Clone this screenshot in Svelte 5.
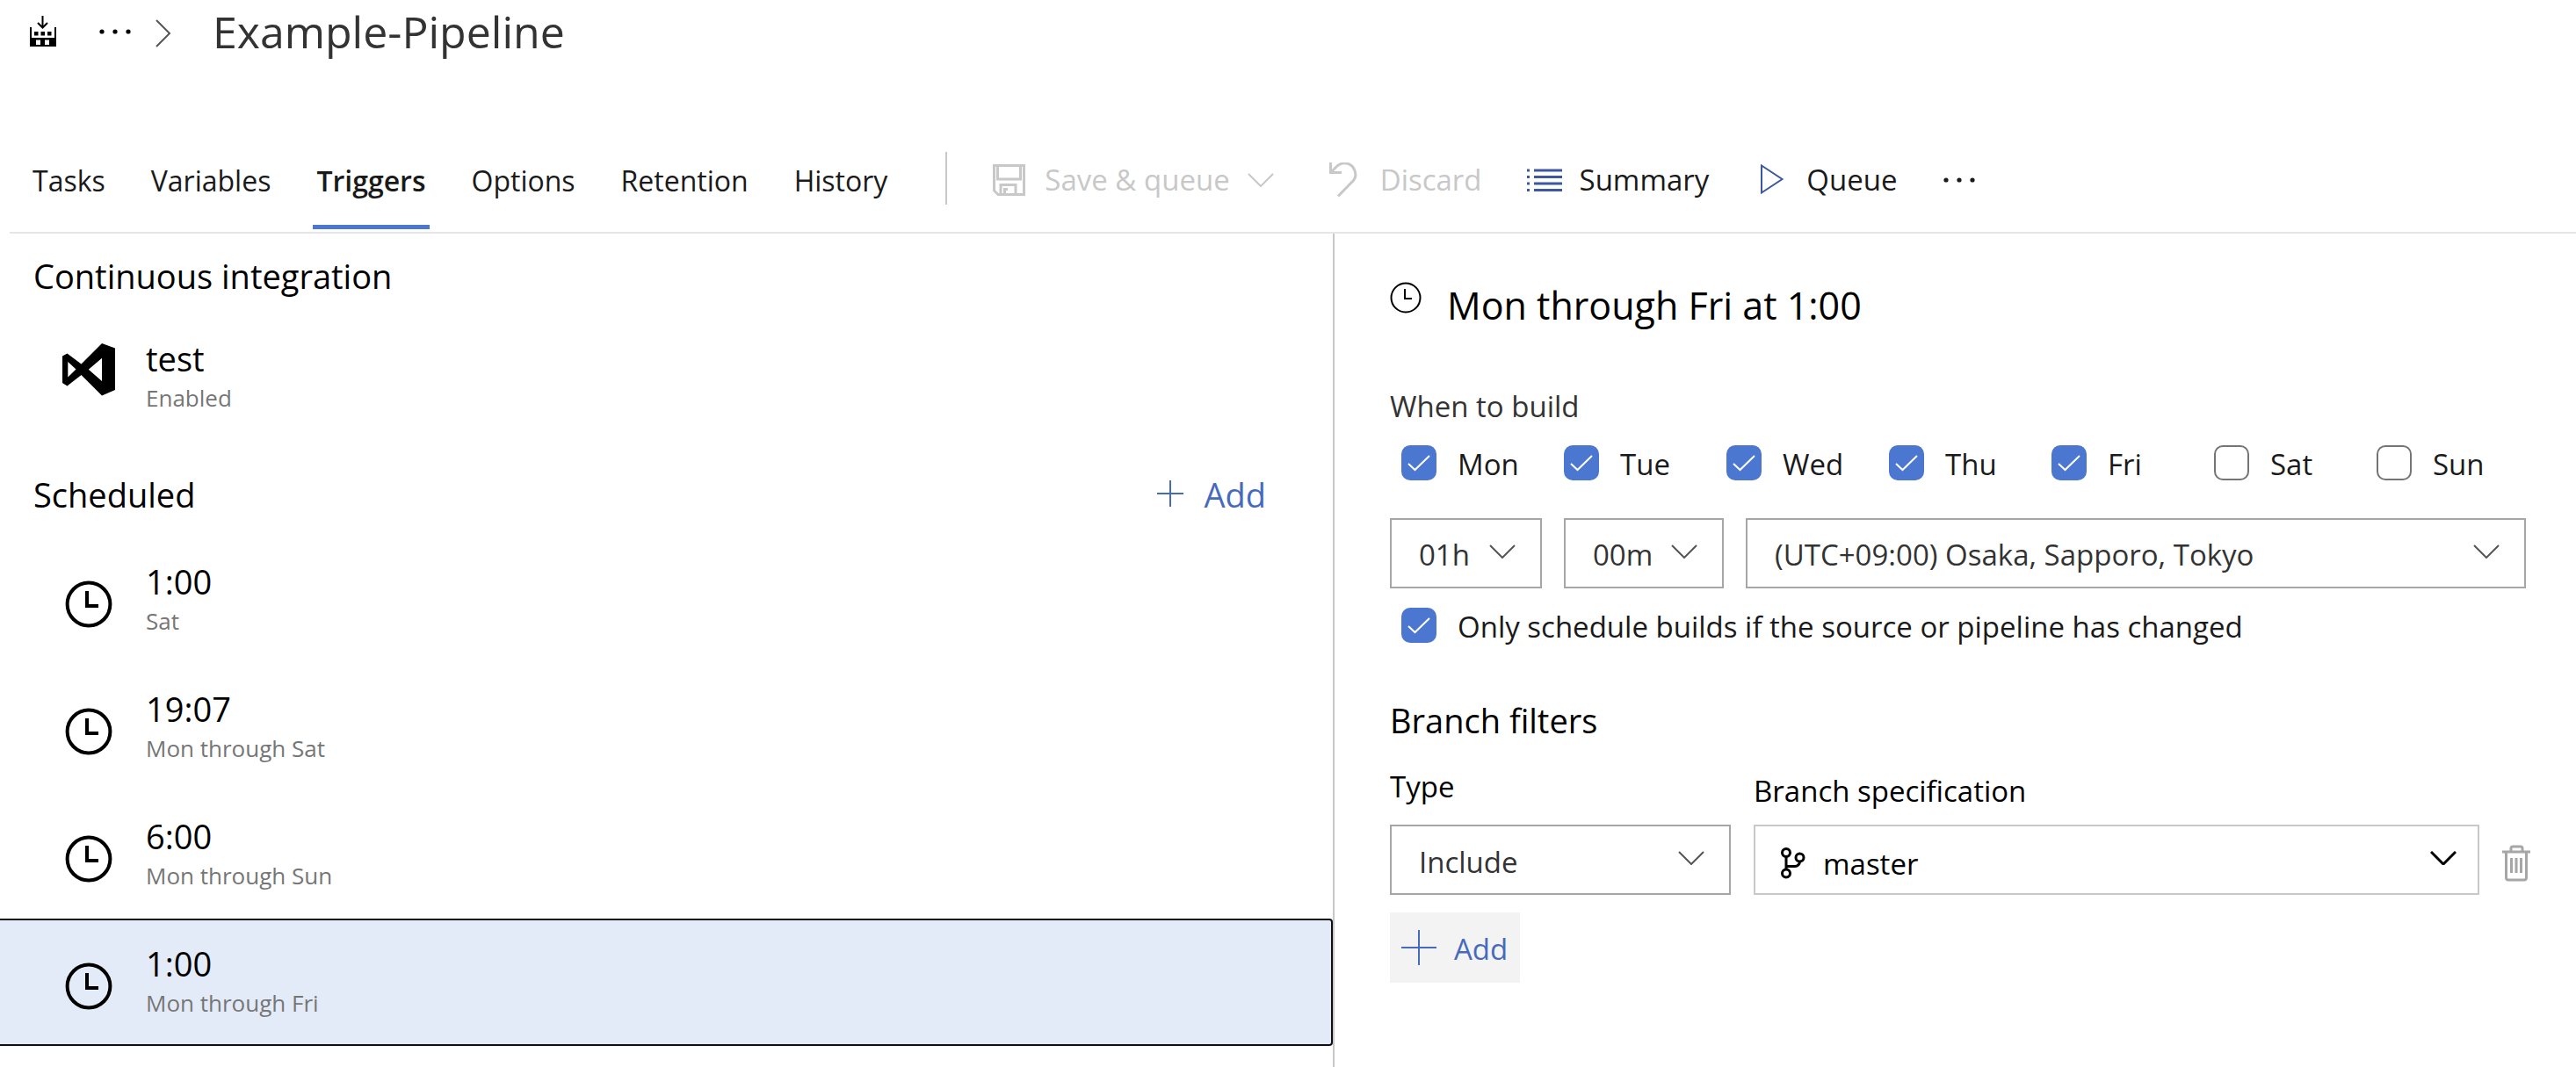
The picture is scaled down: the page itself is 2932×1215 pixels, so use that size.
<script>
  const tabs = ['Tasks', 'Variables', 'Triggers', 'Options', 'Retention', 'History'];
  let activeTab = $state('Triggers');

  const schedules = [
    { time: '1:00', days: 'Sat' },
    { time: '19:07', days: 'Mon through Sat' },
    { time: '6:00', days: 'Mon through Sun' },
    { time: '1:00', days: 'Mon through Fri' }
  ];
  let selected = $state(3);

  let days = $state([
    { name: 'Mon', on: true },
    { name: 'Tue', on: true },
    { name: 'Wed', on: true },
    { name: 'Thu', on: true },
    { name: 'Fri', on: true },
    { name: 'Sat', on: false },
    { name: 'Sun', on: false }
  ]);
  let onlyChanged = $state(true);
</script>

{#snippet chevron()}
  <svg class="chevron" width="30" height="16" viewBox="0 0 30 16" aria-hidden="true">
    <path d="M1 1 15 15 29 1" />
  </svg>
{/snippet}

{#snippet dots()}
  <svg width="40" height="8" viewBox="0 0 40 8" aria-hidden="true">
    <circle cx="4" cy="4" r="2.600" /><circle cx="19" cy="4" r="2.600" /><circle cx="34" cy="4" r="2.600" />
  </svg>
{/snippet}

{#snippet tick()}
  <svg class="tick" width="40" height="40" viewBox="0 0 40 40" aria-hidden="true">
    <path d="M8 21 15.500 28 32 12" />
  </svg>
{/snippet}

<div class="page">
  <header class="crumbs">
    <svg class="build" width="30" height="36" viewBox="0 0 30 36" aria-hidden="true">
      <path d="M14.500 0V13M9 8 14.500 13.500 20 8" fill="none" stroke="#000" stroke-width="2" />
      <path
        fill-rule="evenodd"
        d="M0 13H2V25H28V13H30V35H0ZM7 27.500V33H12V27.500ZM17 27.500V33H22V27.500ZM5 18H9.500V22.500H5ZM12.500 18H17V22.500H12.500ZM20 18H24.500V22.500H20Z"
      />
    </svg>
    <button class="more" aria-label="More breadcrumbs">{@render dots()}</button>
    <svg class="next" width="18" height="32" viewBox="0 0 18 32" aria-hidden="true">
      <path d="M1 1 16 16 1 31" />
    </svg>
    <h1>Example-Pipeline</h1>
  </header>

  <div class="toolbar">
    <nav class="tabs" aria-label="Pipeline">
      {#each tabs as tab}
        <button class="tab" class:active={tab === activeTab} onclick={() => (activeTab = tab)}>{tab}</button>
      {/each}
    </nav>
    <div class="commands">
      <button class="command" disabled>
        <svg width="40" height="36" viewBox="0 0 40 36" aria-hidden="true">
          <path
            class="line"
            d="M2.500 1.500H36.500V34.500H7L2.500 30ZM6.500 2V17H32.500V2M10 34V23.500H27V34M14.500 34V28.500H18"
          />
        </svg>
        Save &amp; queue
        <span class="drop">{@render chevron()}</span>
      </button>
      <button class="command" disabled>
        <svg width="40" height="40" viewBox="0 0 40 40" aria-hidden="true">
          <path class="line" d="M3.500 0V11.500H16M4 11 11 4C17-1 26 0 30 7C33 13 32 19 27 23L12 38.500" />
        </svg>
        Discard
      </button>
      <button class="command">
        <svg class="blue" width="40" height="28" viewBox="0 0 40 28" aria-hidden="true">
          <path class="line" d="M0 3H3M8 3H40M0 10.500H3M8 10.500H40M0 18H3M8 18H40M0 25.500H3M8 25.500H40" />
        </svg>
        Summary
      </button>
      <button class="command">
        <svg class="blue" width="40" height="36" viewBox="0 0 40 36" aria-hidden="true">
          <path class="line play" d="M9 1.500 32.500 17 9 32.500Z" />
        </svg>
        Queue
      </button>
      <button class="command" aria-label="More commands">{@render dots()}</button>
    </div>
  </div>

  <main class="panes">
    <section class="list">
      <h2>Continuous integration</h2>
      <button class="row">
        <svg class="vs" width="60" height="60" viewBox="0 0 60 60" aria-hidden="true">
          <path
            fill-rule="evenodd"
            d="M0 14.500 5.500 11.500 21.500 23.500 45 0 60 5.500V53L45 59.500 21.500 36 5.500 48.500 0 45ZM6.300 21V38.500L15.500 29.500ZM45 16.700 29.800 29.700 45 43Z"
          />
        </svg>
        <span class="text"><span class="name">test</span><span class="sub">Enabled</span></span>
      </button>

      <div class="scheduled">
        <h2>Scheduled</h2>
        <button class="add-link">
          <svg width="32" height="32" viewBox="0 0 32 32" aria-hidden="true"><path d="M16 0V30M1 15H31" /></svg>
          Add
        </button>
      </div>

      {#each schedules as item, i}
        <button class="row" class:selected={i === selected} onclick={() => (selected = i)}>
          <svg class="clock" width="60" height="60" viewBox="-4 -4 60 60" aria-hidden="true">
            <circle cx="26" cy="26" r="24.400" /><path d="M24 11V28H37" />
          </svg>
          <span class="text"><span class="name">{item.time}</span><span class="sub">{item.days}</span></span>
        </button>
      {/each}
    </section>

    <section class="detail">
      <div class="title">
        <svg width="36" height="36" viewBox="0 0 36 36" aria-hidden="true">
          <circle cx="18" cy="18" r="16.500" /><path d="M17 8V19H25" />
        </svg>
        <h2>Mon through Fri at 1:00</h2>
      </div>

      <h3>When to build</h3>
      <div class="days">
        {#each days as day}
          <label class="check">
            <span class="box"><input type="checkbox" bind:checked={day.on} />{@render tick()}</span>
            <span class="caption">{day.name}</span>
          </label>
        {/each}
      </div>

      <div class="time">
        <span class="select">
          <select aria-label="Hour"><option>01h</option></select>
          {@render chevron()}
        </span>
        <span class="select">
          <select aria-label="Minute"><option>00m</option></select>
          {@render chevron()}
        </span>
        <span class="select">
          <select aria-label="Time zone"><option>(UTC+09:00) Osaka, Sapporo, Tokyo</option></select>
          {@render chevron()}
        </span>
      </div>

      <label class="check only">
        <span class="box"><input type="checkbox" bind:checked={onlyChanged} />{@render tick()}</span>
        <span class="caption">Only schedule builds if the source or pipeline has changed</span>
      </label>

      <h2 class="filters">Branch filters</h2>
      <div class="filter">
        <div class="field">
          <label for="type">Type</label>
          <span class="select">
            <select id="type"><option>Include</option><option>Exclude</option></select>
            {@render chevron()}
          </span>
        </div>
        <div class="field spec">
          <label for="branch">Branch specification</label>
          <span class="select branch">
            <select id="branch"><option>master</option></select>
            <svg class="fork" width="28" height="36" viewBox="0 0 28 36" aria-hidden="true">
              <circle cx="6" cy="6" r="4.500" /><circle cx="21.500" cy="11.500" r="4.500" /><circle cx="6" cy="29.500" r="4.500" />
              <path d="M6 10.500V25M21.500 16C21.500 19 19 21.500 16 21.500H6" />
            </svg>
            {@render chevron()}
          </span>
        </div>
        <button class="trash" aria-label="Delete filter">
          <svg width="32" height="42" viewBox="0 0 32 42" aria-hidden="true">
            <path d="M0 8H32M10 8V4Q10 2 12 2H21Q23 2 23 4V8M4.500 8V37Q4.500 40 7 40H25Q27.500 40 27.500 37V8M10.500 15V32M16 15V32M21.500 15V32" />
          </svg>
        </button>
      </div>
      <button class="add-filter">
        <svg width="40" height="40" viewBox="0 0 40 40" aria-hidden="true"><path d="M20 0V40M0 20H40" /></svg>
        <span class="caption">Add</span>
      </button>
    </section>
  </main>
</div>

<style>
  :global(body) {
    background: #fff;
  }
  .page {
    display: flex;
    flex-direction: column;
    min-height: 100vh;
    font-family: 'Open Sans', 'Noto Sans', sans-serif;
    font-size: 33px;
    line-height: 46px;
    color: #1a1a1a;
  }
  h1,
  h2,
  h3 {
    margin: 0;
    font-weight: 400;
  }
  h2 {
    font-size: 38px;
    line-height: 48px;
    color: #000;
  }
  h3 {
    font-size: 33px;
    line-height: 46px;
    color: #333;
  }
  button,
  select {
    font: inherit;
    color: inherit;
    background: none;
    border: 0;
    padding: 0;
    margin: 0;
    cursor: pointer;
  }
  svg {
    flex: none;
    display: block;
  }

  .crumbs {
    display: flex;
    align-items: center;
    padding-left: 34px;
  }
  .more {
    margin: 0 25px 0 48px;
  }
  .next {
    margin-right: 47px;
    margin-top: 4px;
    fill: none;
    stroke: #555;
    stroke-width: 2;
  }
  h1 {
    font-size: 50px;
    line-height: 72px;
    color: #333;
  }

  .toolbar {
    display: flex;
    margin: 77px 0 0 11px;
    padding: 0 0 3px 22px;
    border-bottom: 2px solid #e6e6e6;
  }
  .tabs {
    display: flex;
    gap: 44px;
    font-size: 32px;
  }
  .tab {
    padding: 34px 4px 27px;
    border-bottom: 5px solid transparent;
  }
  .tab.active {
    font-weight: 600;
    border-color: #4b77d1;
  }
  .commands {
    display: flex;
    align-items: center;
    gap: 51px;
    height: 60px;
    margin: 24px 0 0 62px;
    padding-left: 51px;
    border-left: 2px solid #c8c8c8;
  }
  .command {
    display: flex;
    align-items: center;
    gap: 20px;
    padding-top: 3px;
  }
  .command:disabled {
    color: #c8c8c8;
    cursor: default;
  }
  .line {
    fill: none;
    stroke: currentColor;
    stroke-width: 3;
  }
  .play {
    stroke-width: 2;
  }
  .command svg {
    fill: currentColor;
  }
  .command .blue {
    color: #3b58a0;
  }
  .drop {
    width: 40px;
  }
  .chevron,
  .command .chevron {
    fill: none;
    stroke: #555;
    stroke-width: 2;
  }
  .command .chevron {
    stroke: currentColor;
  }

  .panes {
    flex: 1;
    display: grid;
    grid-template-columns: minmax(0, 1519fr) minmax(0, 1413fr);
  }
  .list {
    padding-top: 24px;
    border-right: 2px solid #c8c8c8;
  }
  .list h2 {
    padding-left: 38px;
  }
  .row {
    display: flex;
    gap: 35px;
    width: 100%;
    height: 145px;
    padding: 25px 69px 25px 71px;
    border: 2px solid transparent;
    border-left: 0;
    text-align: left;
  }
  .list > h2 + .row {
    margin-top: 19px;
  }
  .row.selected {
    background: #e4ebf8;
    border-color: #101014;
    border-radius: 0 4px 4px 0;
  }
  .vs {
    margin-top: 7px;
  }
  .clock {
    margin-top: 20px;
    fill: none;
    stroke: #000;
    stroke-width: 4;
  }
  .text {
    display: flex;
    flex-direction: column;
  }
  .name {
    font-size: 38px;
    line-height: 48px;
    color: #000;
  }
  .sub {
    font-size: 26px;
    line-height: 42px;
    color: #767676;
  }
  .scheduled {
    display: flex;
    justify-content: space-between;
    padding: 37px 76px 24px 0;
  }
  .add-link {
    display: flex;
    align-items: center;
    gap: 22px;
    font-size: 38px;
    line-height: 48px;
    color: #466bbd;
  }
  .add-link svg,
  .add-filter svg {
    stroke: currentColor;
    stroke-width: 2;
  }

  .detail {
    padding: 52px 52px 0 63px;
  }
  .title {
    display: flex;
    gap: 29px;
    margin-bottom: 62px;
  }
  .title svg {
    margin-top: 3px;
    fill: none;
    stroke: #000;
    stroke-width: 2;
  }
  .title h2 {
    font-size: 43px;
    line-height: 60px;
  }
  .days {
    display: grid;
    grid-template-columns: repeat(6, 185px) 1fr;
    padding-left: 13px;
    margin-top: 21px;
  }
  .check {
    display: flex;
    align-items: center;
    gap: 24px;
    height: 40px;
  }
  .caption {
    padding-top: 3px;
  }
  .box {
    display: grid;
  }
  .box > :global(*) {
    grid-area: 1 / 1;
  }
  .box input {
    appearance: none;
    width: 40px;
    height: 40px;
    margin: 0;
    border: 2px solid #757575;
    border-radius: 10px;
    background: #fff;
  }
  .box input:checked {
    background: #4b77d1;
    border-color: #4b77d1;
  }
  .tick {
    pointer-events: none;
    fill: none;
    stroke: #fff;
    stroke-width: 2;
    z-index: 1;
  }
  .time {
    display: grid;
    grid-template-columns: 173px 182px 1fr;
    gap: 25px;
    margin: 43px 5px 22px 0;
  }
  .select {
    display: grid;
    align-items: center;
    color: #333;
  }
  .select > :global(*) {
    grid-area: 1 / 1;
  }
  .select select {
    appearance: none;
    width: 100%;
    height: 80px;
    padding: 3px 60px 0 31px;
    border: 2px solid #a6a6a6;
    border-radius: 0;
  }
  .select .chevron {
    justify-self: end;
    margin: 0 30px 4px 0;
    pointer-events: none;
  }
  .only {
    padding-left: 13px;
  }
  .filters {
    margin: 64px 0 28px;
  }
  .filter {
    display: grid;
    grid-template-columns: 388px 1fr 32px;
    align-items: end;
    column-gap: 26px;
    color: #000;
  }
  .field {
    display: grid;
    gap: 20px;
  }
  .spec {
    gap: 15px;
  }
  .field .select select {
    padding-top: 5px;
  }
  .field .branch select {
    padding-left: 77px;
    padding-top: 10px;
    border-color: #c8c8c8;
    color: #000;
  }
  .branch .chevron {
    margin-right: 26px;
    stroke: #000;
    stroke-width: 3;
  }
  .fork {
    margin-left: 31px;
    margin-top: 8px;
    fill: none;
    stroke: #000;
    stroke-width: 3;
    pointer-events: none;
  }
  .filters + .filter {
    padding-top: 1px;
  }
  .trash {
    padding: 23px 0 15px;
  }
  .trash svg {
    fill: none;
    stroke: #a6a6a6;
    stroke-width: 3;
  }
  .add-filter {
    display: flex;
    align-items: center;
    gap: 20px;
    height: 80px;
    margin-top: 20px;
    padding: 0 14px 0 13px;
    background: #f3f3f3;
    color: #466bbd;
  }
</style>
